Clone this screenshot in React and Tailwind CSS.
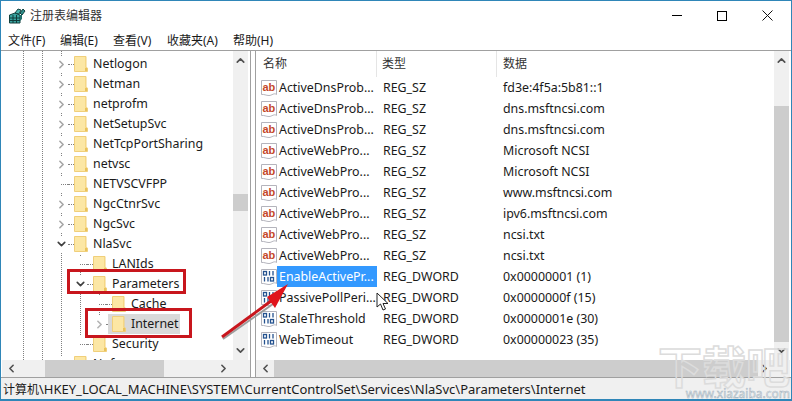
import { ChevronRight, ChevronDown, ChevronUp, ChevronLeft } from 'lucide-react';

const treeRows = [
  { label: 'Netlogon', level: 1, arrow: 'right' },
  { label: 'Netman', level: 1, arrow: 'right' },
  { label: 'netprofm', level: 1, arrow: 'right' },
  { label: 'NetSetupSvc', level: 1, arrow: 'right' },
  { label: 'NetTcpPortSharing', level: 1, arrow: 'right' },
  { label: 'netvsc', level: 1, arrow: 'right' },
  { label: 'NETVSCVFPP', level: 1 },
  { label: 'NgcCtnrSvc', level: 1, arrow: 'right' },
  { label: 'NgcSvc', level: 1, arrow: 'right' },
  { label: 'NlaSvc', level: 1, arrow: 'down' },
  { label: 'LANIds', level: 2 },
  { label: 'Parameters', level: 2, arrow: 'down' },
  { label: 'Cache', level: 3 },
  { label: 'Internet', level: 3, arrow: 'right', selected: true },
  { label: 'Security', level: 2 },
  { label: 'Npfs', level: 1, arrow: 'right' },
];

const valueRows = [
  ['ActiveDnsProb...', 'REG_SZ', 'fd3e:4f5a:5b81::1', 'sz'],
  ['ActiveDnsProb...', 'REG_SZ', 'dns.msftncsi.com', 'sz'],
  ['ActiveDnsProb...', 'REG_SZ', 'dns.msftncsi.com', 'sz'],
  ['ActiveWebPro...', 'REG_SZ', 'Microsoft NCSI', 'sz'],
  ['ActiveWebPro...', 'REG_SZ', 'Microsoft NCSI', 'sz'],
  ['ActiveWebPro...', 'REG_SZ', 'www.msftncsi.com', 'sz'],
  ['ActiveWebPro...', 'REG_SZ', 'ipv6.msftncsi.com', 'sz'],
  ['ActiveWebPro...', 'REG_SZ', 'ncsi.txt', 'sz'],
  ['ActiveWebPro...', 'REG_SZ', 'ncsi.txt', 'sz'],
  ['EnableActivePr...', 'REG_DWORD', '0x00000001 (1)', 'dw', true],
  ['PassivePollPeri...', 'REG_DWORD', '0x0000000f (15)', 'dw'],
  ['StaleThreshold', 'REG_DWORD', '0x0000001e (30)', 'dw'],
  ['WebTimeout', 'REG_DWORD', '0x00000023 (35)', 'dw'],
];

const menus = [
  ['文件(F)', 'w-[52px]'],
  ['编辑(E)', 'w-[53px]'],
  ['查看(V)', 'w-[54px]'],
  ['收藏夹(A)', 'w-[66px]'],
  ['帮助(H)', 'w-[52px]'],
];

const levelPad = { 1: 'pl-[53px]', 2: 'pl-[72px]', 3: 'pl-[91px]' };

const Folder = () => (
  <svg width="14" height="16" viewBox="0 0 14 16" className="shrink-0">
    <path d="M0.500 0.500H12V11.500L13.500 12V15.500H0.500Z" fill="#fbe08e" stroke="#f0cf7a" />
    <rect x="1" y="1" width="10" height="14" fill="#fce7a4" />
    <rect x="11" y="12" width="2" height="3" fill="#e9c25c" />
  </svg>
);

const Paper = () => (
  <path d="M0.500 0.500H15.500V14.500C13 12.500 11 15.500 8 15.500C5 15.500 3 14 0.500 14.500Z" fill="#fff" stroke="#b4b4bc" />
);

const SzIcon = () => (
  <svg width="16" height="16" viewBox="0 0 16 16" className="shrink-0">
    <Paper />
    <text x="1.500" y="10.500" fontSize="11" fontWeight="700" fill="#c4472a" fontFamily="Liberation Sans, sans-serif">ab</text>
  </svg>
);

const DwordIcon = () => (
  <svg width="16" height="16" viewBox="0 0 16 16" className="shrink-0">
    <Paper />
    <g fill="none" stroke="#24528f" strokeWidth="1.300">
      <rect x="2.500" y="2.500" width="3" height="3.500" />
      <path d="M8.500 2v4.500M12 2v4.500" />
      <path d="M3.500 8v4.500M7 8v4.500" />
      <rect x="9.500" y="8.500" width="3" height="3.500" />
    </g>
  </svg>
);

const AppIcon = () => (
  <svg width="17" height="16" viewBox="0 0 17 16" className="shrink-0">
    <path d="M0.500 7L6 5L11 7V15H0.500Z" fill="#3aa4a0" stroke="#12413f" />
    <path d="M0.500 10H11M0.500 12.500H11M4 7V15M7.500 7V15" stroke="#0f3b3a" fill="none" />
    <path d="M6 5L9 1L12 2L10 6Z" fill="#4cb8b2" stroke="#12413f" />
    <path d="M11 5L14 1L16 3L13 7Z" fill="#2f8f8c" stroke="#12413f" />
    <path d="M11 7L13 7V11L11 13Z" fill="#1f6f6c" />
  </svg>
);

const Bar = ({ className, children }) => (
  <div className={`relative flex items-center bg-[#f0f0f0] ${className}`}>{children}</div>
);

const ScrollV = ({ thumb }) => (
  <Bar className="flex-col justify-between w-[15px] shrink-0 py-[3px]">
    <ChevronUp size={13} strokeWidth={3} className="text-[#505050]" />
    {thumb}
    <ChevronDown size={13} strokeWidth={3} className="text-[#505050] relative" />
  </Bar>
);

const TreeRow = ({ row }) => (
  <div className={`relative flex items-center h-5 ${levelPad[row.level]}`}>
    <span className="flex items-center justify-center w-[13px] h-[16px] shrink-0 bg-white relative">
      {row.arrow === 'right' && <ChevronRight size={13} strokeWidth={3} className={row.selected ? 'text-[#b4b4b4]' : 'text-[#a6a6a6]'} />}
      {row.arrow === 'down' && <ChevronDown size={14} strokeWidth={3} className="text-[#404040]" />}
      {!row.arrow && <span className="ml-[6px] w-[7px] border-t border-dotted border-[#808080]" />}
    </span>
    <span className="w-[6px] shrink-0 border-t border-dotted border-[#808080]" />
    <span className={`flex items-center h-5 ${row.selected ? 'bg-[#d9d9d9] -ml-1 pl-1 w-[72px]' : ''}`}>
      <Folder />
      <span className="pl-[5px] text-[#1a1a1a] whitespace-nowrap">{row.label}</span>
    </span>
  </div>
);

export default function App() {
  return (
    <div className="relative w-[792px] h-[401px] overflow-hidden bg-white border-[#2f86b8] border-t border-x border-b-2 flex flex-col text-[12.4px] leading-5 font-['Noto_Sans','Noto_Sans_CJK_SC',sans-serif] text-[#1a1a1a]">
      {/* title bar */}
      <div className="flex items-center h-[29px] shrink-0 pl-2">
        <AppIcon />
        <span className="ml-[4px] text-[12px] text-[#333]">注册表编辑器</span>
        <div className="ml-auto flex items-center gap-[35px] pr-[18px]">
          <span className="w-[10px] h-px bg-black" />
          <span className="w-[10px] h-[10px] border border-black" />
          <svg width="11" height="11" viewBox="0 0 11 11"><path d="M0.500 0.500L10.500 10.500M10.500 0.500L0.500 10.500" stroke="#111" fill="none" /></svg>
        </div>
      </div>

      {/* menu */}
      <div className="flex h-[21px] shrink-0 pl-[7px] pt-px text-[12px] border-b border-[#a0a0a0]">
        {menus.map(([m, w]) => (
          <span key={m} className={w}>{m}</span>
        ))}
      </div>

      {/* panes */}
      <div className="flex flex-1 min-h-0">
        <div className="flex flex-col w-[249px] ml-px shrink-0 border-r border-[#a0a0a0]">
          <div className="flex flex-1 min-h-0">
            <div className="relative flex-1 overflow-hidden pt-[3px]">
              <span className="absolute left-[21px] top-0 h-full border-l border-dotted border-[#808080]" />
              <span className="absolute left-[40px] top-0 h-full border-l border-dotted border-[#808080]" />
              <span className="absolute left-[59px] top-0 h-full border-l border-dotted border-[#808080]" />
              <span className="absolute left-[78px] top-[204px] h-[88px] border-l border-dotted border-[#808080]" />
              <span className="absolute left-[97px] top-[242px] h-[30px] border-l border-dotted border-[#808080]" />
              {treeRows.map((row) => (
                <TreeRow key={row.label} row={row} />
              ))}
            </div>
            <ScrollV thumb={<span className="absolute left-0 top-[143px] w-[15px] h-[17px] bg-[#cdcdcd]" />} />
            <span className="w-[2px] shrink-0" />
          </div>
          <div className="flex h-[17px] shrink-0">
            <Bar className="flex-1 justify-between px-[3px]">
              <ChevronLeft size={13} strokeWidth={3} className="text-[#505050]" />
              <span className="absolute left-[43px] w-[119px] h-full bg-[#cdcdcd]" />
              <ChevronRight size={13} strokeWidth={3} className="text-[#505050]" />
            </Bar>
            <span className="w-[17px] shrink-0 bg-[#f0f0f0]" />
          </div>
        </div>

        <div className="flex flex-col flex-1 min-w-0 ml-[4px] mr-px border-l border-[#a0a0a0]">
          <div className="flex flex-1 min-h-0">
            <div className="flex-1 min-w-0 overflow-hidden">
              <div className="flex h-[26px] text-[12px] text-[#333] items-center">
                <span className="w-[121px] pl-[7px] border-r border-[#e5e5e5] h-full flex items-center">名称</span>
                <span className="w-[120px] pl-[5px] border-r border-[#e5e5e5] h-full flex items-center">类型</span>
                <span className="pl-[6px]">数据</span>
              </div>
              {valueRows.map(([name, type, data, kind, active], i) => (
                <div key={i} className="flex items-center h-[21px]">
                  <span className="w-[121px] flex items-center pl-[5px]">
                    {kind === 'sz' ? <SzIcon /> : <DwordIcon />}
                    <span className={`px-[2px] h-[21px] leading-[21px] whitespace-nowrap ${active ? 'bg-[#3399ff] text-white w-[100px]' : ''}`}>{name}</span>
                  </span>
                  <span className="w-[120px] pl-[6px]">{type}</span>
                  <span className="pl-[6px]">{data}</span>
                </div>
              ))}
            </div>
            <ScrollV thumb={<span className="absolute left-0 top-[55px] w-[15px] h-[236px] bg-[#cdcdcd]" />} />
            <span className="w-px shrink-0" />
          </div>
          <div className="flex h-[17px] shrink-0">
            <Bar className="flex-1 justify-between px-[3px]">
              <ChevronLeft size={13} strokeWidth={3} className="text-[#505050]" />
              <span className="absolute left-[18px] w-[484px] h-full bg-[#cdcdcd]" />
              <ChevronRight size={13} strokeWidth={3} className="text-[#404040] relative" />
            </Bar>
            <span className="w-[16px] shrink-0 bg-[#f0f0f0]" />
          </div>
        </div>
      </div>

      {/* status bar */}
      <div className="h-[22px] shrink-0 border-t border-[#a0a0a0] bg-[#f0f0f0] pl-[2px] pt-px text-[13px] whitespace-nowrap">
        <span className="text-[12px]">计算机</span>\HKEY_LOCAL_MACHINE\SYSTEM\CurrentControlSet\Services\NlaSvc\Parameters\Internet
      </div>

      {/* annotations */}
      <div className="absolute left-[66px] top-[268px] w-[119px] h-[25px] border-[3px] border-[#c8161d]" />
      <div className="absolute left-[84px] top-[307px] w-[107px] h-[30px] border-[3px] border-[#c8161d]" />
      <svg className="absolute left-[217px] top-[279px]" width="74" height="62" viewBox="0 0 74 62">
        <path d="M5 59L55 24" stroke="#9c9c9c" strokeWidth="2" fill="none" />
        <path d="M4 57L53 21" stroke="#c8161d" strokeWidth="3" fill="none" />
        <path d="M70 4L49 17L57 28Z" fill="#e0141c" />
      </svg>
      {/* mouse pointer */}
      <svg className="absolute left-[375px] top-[291px]" width="13" height="20" viewBox="0 0 13 20">
        <path d="M1 1V15L4.500 12L7 18L9.500 17L7 11.500H12Z" fill="#fff" stroke="#222" />
      </svg>
      {/* watermark */}
      <div className="absolute left-[655px] top-[341px] w-[134px] flex flex-col items-end text-transparent">
        <span className="text-[44px] leading-[46px] font-bold font-['Noto_Sans_CJK_SC',sans-serif] [-webkit-text-stroke:1.500px_#dcdcdc]">下载吧</span>
        <span className="text-[12px] leading-[12px] whitespace-nowrap [-webkit-text-stroke:0.500px_#9fb0bd]">www.xiazaiba.com</span>
      </div>
    </div>
  );
}
